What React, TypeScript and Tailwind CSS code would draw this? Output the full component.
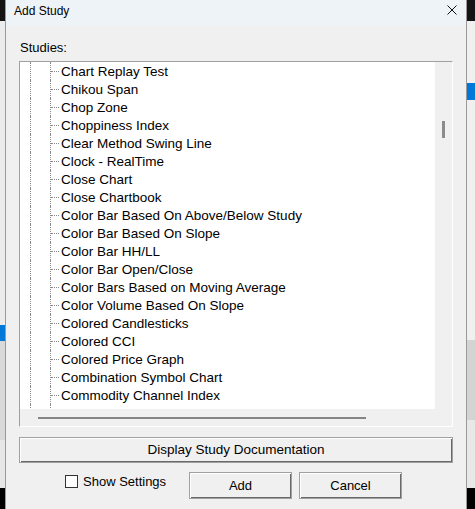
import React from "react";

const studies = [
  "Chart Replay Test",
  "Chikou Span",
  "Chop Zone",
  "Choppiness Index",
  "Clear Method Swing Line",
  "Clock - RealTime",
  "Close Chart",
  "Close Chartbook",
  "Color Bar Based On Above/Below Study",
  "Color Bar Based On Slope",
  "Color Bar HH/LL",
  "Color Bar Open/Close",
  "Color Bars Based on Moving Average",
  "Color Volume Based On Slope",
  "Colored Candlesticks",
  "Colored CCI",
  "Colored Price Graph",
  "Combination Symbol Chart",
  "Commodity Channel Index",
  "Commodity Channel Index - Smoothed",
];

function TreeRow({ label }: { label: string }) {
  return (
    <div className="flex h-[18px] shrink-0 items-center">
      <div className="ml-[10px] h-full w-[20px] border-l border-dotted border-[#8a8a8a]" />
      <div className="flex h-full items-center border-l border-dotted border-[#8a8a8a]">
        <div className="w-[8px] border-t border-dotted border-[#8a8a8a]" />
      </div>
      <span className="ml-[2px] whitespace-nowrap pt-[2px]">{label}</span>
    </div>
  );
}

function WinButton({ children, className }: { children: React.ReactNode; className?: string }) {
  return (
    <button
      className={
        "flex items-center justify-center border border-[#a0a0a0] bg-[#f0f0f0] text-black shadow-[inset_1px_1px_0_#ffffff,inset_-1px_-1px_0_#696969] " +
        (className ?? "")
      }
    >
      {children}
    </button>
  );
}

export default function App() {
  return (
    <div className="flex h-[509px] w-[475px] overflow-hidden bg-[#f0f0f0] font-['Liberation_Sans',Arial,sans-serif] text-black">
      {/* app behind, left edge */}
      <div className="flex w-[5px] shrink-0 flex-col">
        <div className="h-[21px] bg-[#141414]" />
        <div className="h-[304px] bg-[#ececec]" />
        <div className="h-[16px] bg-[#0078d7]" />
        <div className="h-[99px] bg-[#d9d9d9]" />
        <div className="h-[48px] bg-[#e6e6e6]" />
        <div className="flex-1 bg-[#000]" />
      </div>

      {/* dialog */}
      <div className="flex w-[462px] shrink-0 flex-col border-x border-[#9a9a9a] bg-[#f0f0f0]">
        <div className="flex h-[26px] items-start bg-[#eef3f8] pl-[8px] pt-[4px]">
          <span className="text-[12px] leading-[14px]">Add Study</span>
          <svg className="ml-auto mr-[9px] mt-[1px]" width="10" height="10" viewBox="0 0 10 10">
            <path d="M0.5 0.5 L9.5 9.5 M9.5 0.5 L0.5 9.5" stroke="#111" strokeWidth="1" />
          </svg>
        </div>

        <div className="flex flex-col px-[13px] pt-[14px]">
          <div className="pl-[1px] text-[13px] leading-[16px]">Studies:</div>

          <div className="mt-[5px] flex h-[366px] flex-col border border-b-white border-l-[#a0a0a0] border-r-white border-t-[#a0a0a0]">
            <div className="flex min-h-0 flex-1">
              <div className="flex min-w-0 flex-1 flex-col overflow-hidden bg-white text-[13.5px]">
                {studies.map((s) => (
                  <TreeRow key={s} label={s} />
                ))}
              </div>
              <div className="w-[17px] bg-[#f0f0f0] pt-[59px]">
                <div className="ml-[7px] h-[17px] w-[3px] bg-[#8b8b8b]" />
              </div>
            </div>
            <div className="flex h-[17px]">
              <div className="flex flex-1 items-center bg-[#f0f0f0] pl-[18px]">
                <div className="h-[2px] w-[328px] bg-[#858585]" />
              </div>
              <div className="w-[17px] bg-[#f0f0f0]" />
            </div>
          </div>

          <WinButton className="mt-[10px] h-[26px] w-full text-[13.5px]">Display Study Documentation</WinButton>

          <div className="mt-[9px] flex h-[27px] items-start">
            <div className="flex w-[170px] items-center pt-[3px]">
              <div className="ml-[46px] h-[13px] w-[13px] border border-[#333] bg-white" />
              <span className="ml-[5px] text-[13px] leading-[13px]">Show Settings</span>
            </div>
            <WinButton className="h-[27px] w-[103px] text-[13px]">Add</WinButton>
            <WinButton className="ml-[7px] h-[27px] w-[103px] text-[13px]">Cancel</WinButton>
          </div>
        </div>
      </div>

      {/* app behind, right edge */}
      <div className="flex flex-1 flex-col">
        <div className="h-[21px] bg-[#141414]" />
        <div className="h-[62px] bg-[#f0f0f0]" />
        <div className="h-[17px] bg-[#0078d7]" />
        <div className="h-[240px] bg-[#f0f0f0]" />
        <div className="h-[80px] bg-[#d4d4d4]" />
        <div className="h-[68px] bg-[#e8e8e8]" />
        <div className="flex-1 bg-[#000]" />
      </div>
    </div>
  );
}
